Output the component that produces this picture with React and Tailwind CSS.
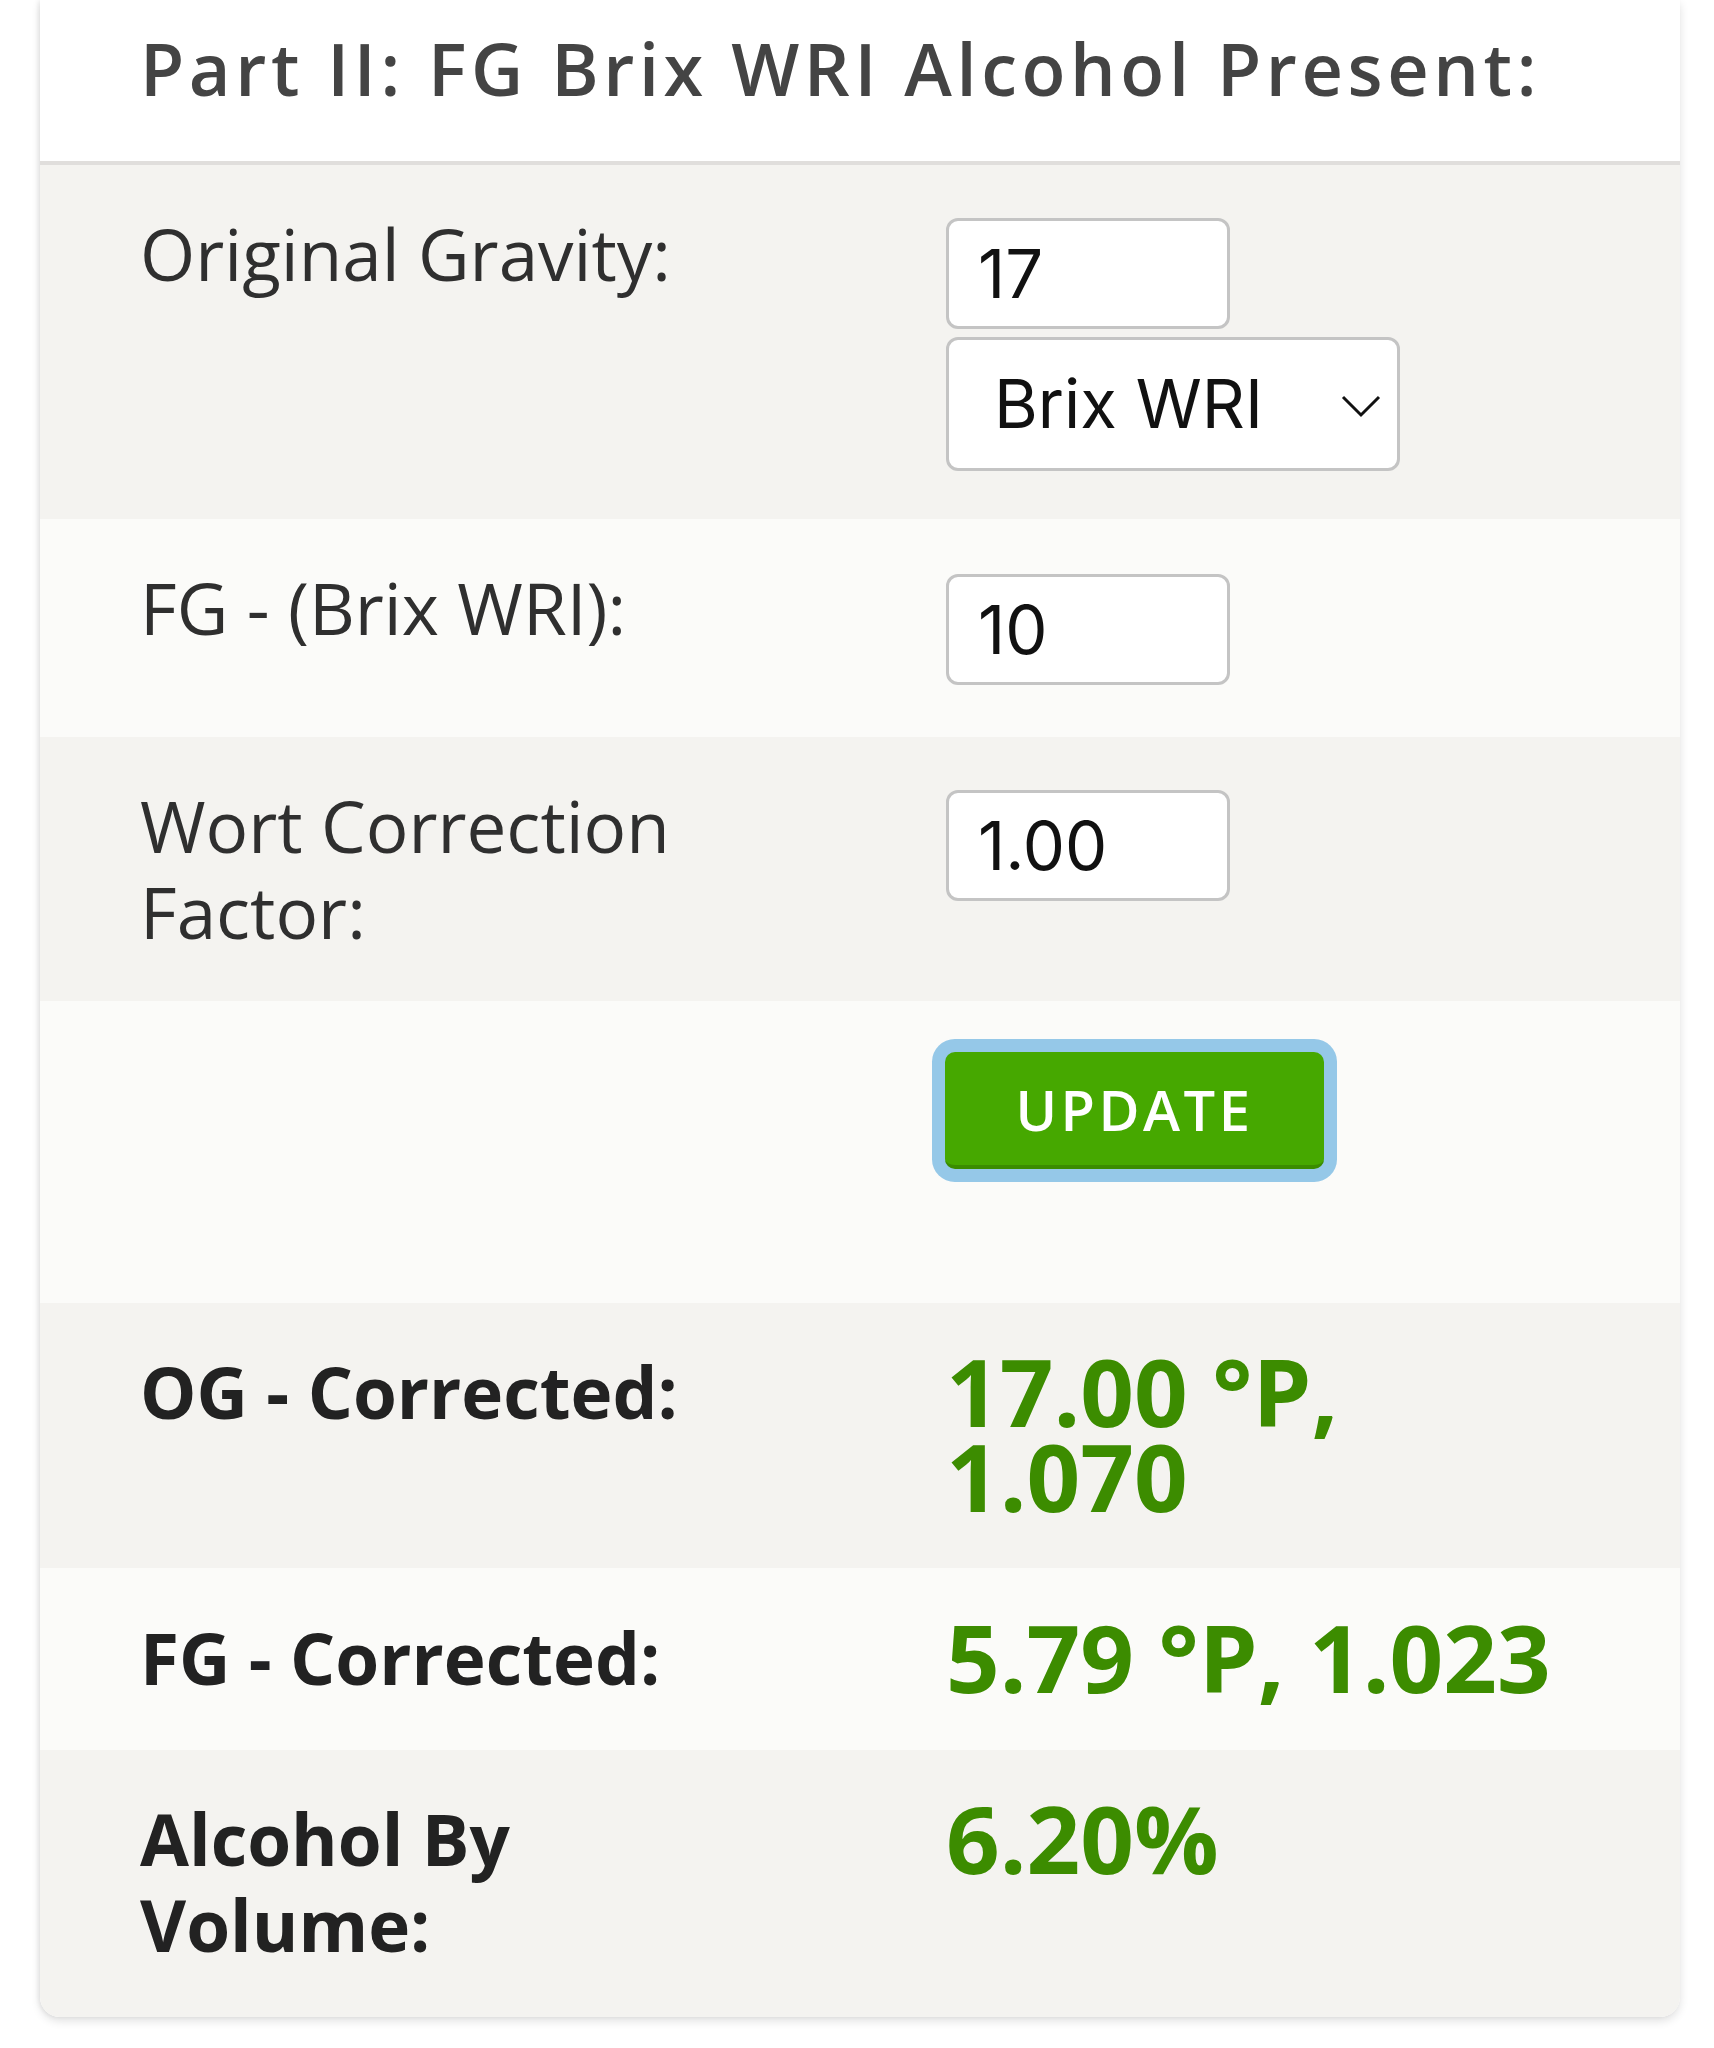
import React from "react";

const sans = { fontFamily: '"Open Sans", "Liberation Sans", sans-serif' };

function Row({ shade, className = "", label, bold, children }) {
  return (
    <div
      className={`grid grid-cols-[806px_1fr] pl-[100px] pr-[40px] ${
        shade ? "bg-[#f4f3f0]" : "bg-[#fbfbf9]"
      } ${className}`}
    >
      <div
        className={`text-[71px] leading-[86px] ${
          bold ? "font-bold text-[#222222]" : "text-[#2f2f2f]"
        }`}
      >
        {label}
      </div>
      <div>{children}</div>
    </div>
  );
}

function NumberBox({ value, className = "" }) {
  return (
    <input
      readOnly
      value={value}
      className={`block w-[284px] h-[111px] rounded-[12px] border-[3px] border-[#c4c4c4] bg-white pl-[29px] text-[67px] text-[#111111] outline-none ${className}`}
      style={{ fontFamily: 'Inter, "Liberation Sans", sans-serif' }}
    />
  );
}

function Result({ children }) {
  return (
    <div className="text-[94px] leading-[85px] font-bold text-[#3c8c00]">
      {children}
    </div>
  );
}

export default function App() {
  return (
    <div className="min-h-screen bg-white" style={sans}>
      <div className="ml-[40px] w-[1640px] rounded-b-[20px] bg-white shadow-[0_4px_10px_rgba(0,0,0,0.12),-2px_0_4px_rgba(0,0,0,0.06)] overflow-hidden">
        {/* Header */}
        <div className="pl-[100px] pt-[25px] pb-[50px] border-b-[4px] border-[#e0dedc]">
          <h2 className="text-[72px] leading-[86px] font-semibold tracking-[4.6px] text-[#444444]">
            Part II: FG Brix WRI Alcohol Present:
          </h2>
        </div>

        {/* Inputs */}
        <Row shade label="Original Gravity:" className="pt-[46px] pb-[46px]">
          <NumberBox value="17" className="mt-[7px]" />
          <div className="relative mt-[8px] mb-[2px] w-[454px]">
            <select
              defaultValue="brix"
              className="block w-[454px] h-[134px] appearance-none rounded-[12px] border-[3px] border-[#c4c4c4] bg-white pl-[45px] text-[67px] text-[#111111] outline-none"
              style={{ fontFamily: 'Inter, "Liberation Sans", sans-serif' }}
            >
              <option value="brix">Brix WRI</option>
            </select>
            <svg
              className="absolute right-[19px] top-[57px]"
              width="40"
              height="24"
              viewBox="0 0 40 24"
              fill="none"
            >
              <path d="M2 3 L20 21 L38 3" stroke="#111" strokeWidth="3" />
            </svg>
          </div>
        </Row>

        <Row label="FG - (Brix WRI):" className="pt-[46px] pb-[46px]">
          <NumberBox value="10" className="mt-[9px] mb-[6px]" />
        </Row>

        <Row
          shade
          label={
            <>
              Wort Correction
              <br />
              Factor:
            </>
          }
          className="pt-[46px] pb-[46px]"
        >
          <NumberBox value="1.00" className="mt-[7px]" />
        </Row>

        <Row label="" className="pt-[46px] pb-[134px] h-[302px]">
          <button className="mt-[5px] ml-[-1px] w-[379px] h-[117px] rounded-[10px] bg-[#46a800] border-b-[4px] border-[#3a8c00] text-white text-[56px] font-semibold tracking-[3.5px] shadow-[0_0_0_13px_#95c8e8]">
            UPDATE
          </button>
        </Row>

        {/* Results */}
        <Row shade bold label="OG - Corrected:" className="h-[265px] pt-[46px]">
          <Result>
            17.00 °P,
            <br />
            1.070
          </Result>
        </Row>

        <Row bold label="FG - Corrected:" className="h-[182px] pt-[47px]">
          <Result>5.79 °P, 1.023</Result>
        </Row>

        <Row
          shade
          bold
          label={
            <>
              Alcohol By
              <br />
              Volume:
            </>
          }
          className="h-[267px] pt-[46px]"
        >
          <Result>6.20%</Result>
        </Row>
      </div>
    </div>
  );
}
